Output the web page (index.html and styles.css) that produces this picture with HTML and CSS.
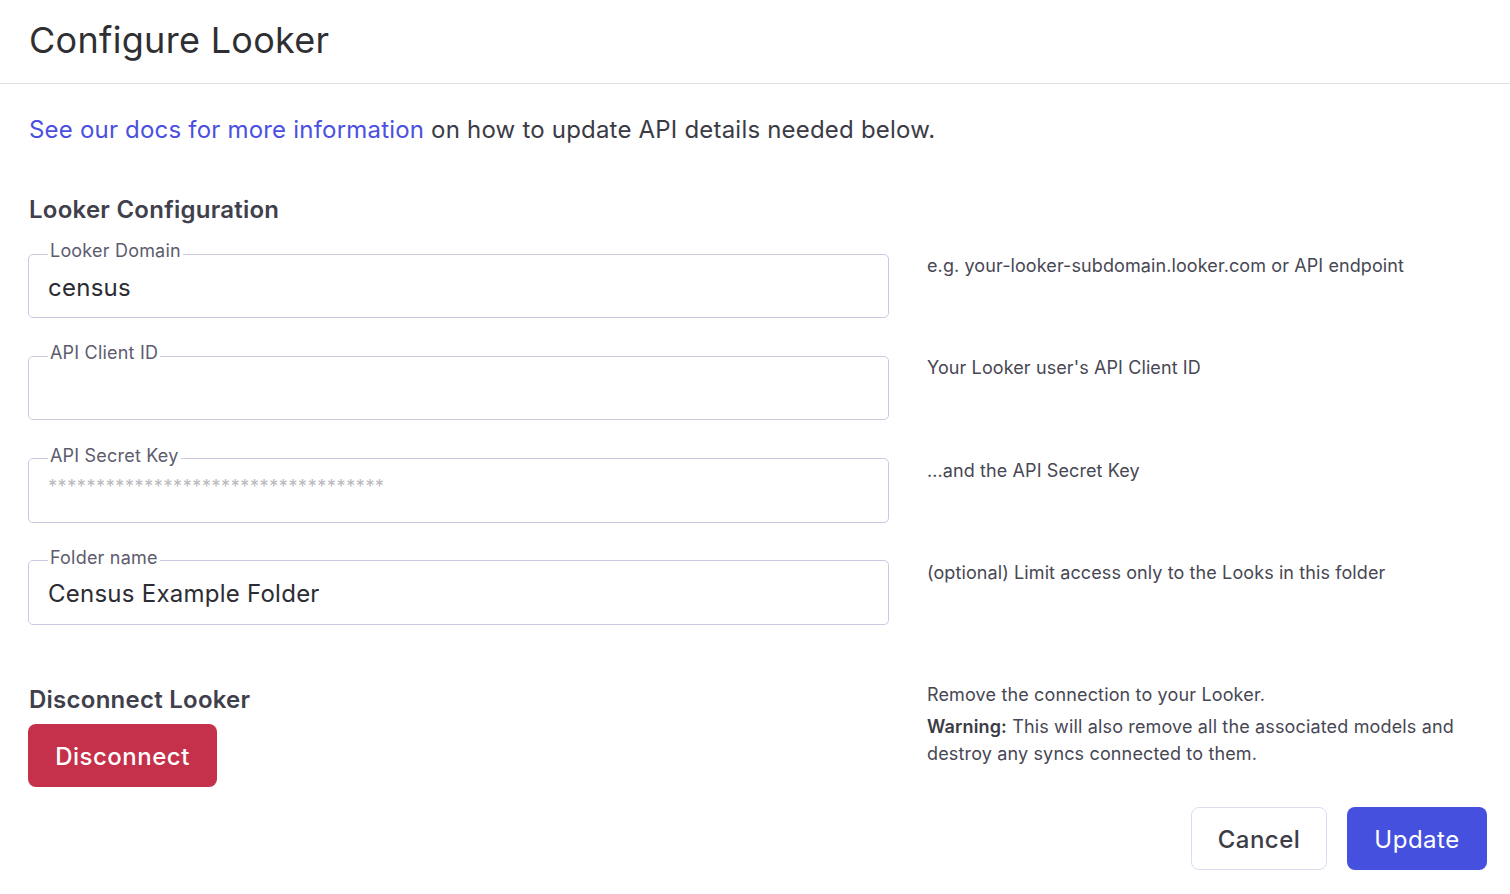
FILE: index.html
```html
<!DOCTYPE html>
<html lang="en">
<head>
<meta charset="utf-8">
<title>Configure Looker</title>
<link rel="stylesheet" href="styles.css">
</head>
<body>
<header class="modal-header">
  <h1 class="modal-title">Configure Looker</h1>
</header>
<main class="modal-body">
  <p class="intro"><a class="link" href="#">See our docs for more information</a> on how to update API details needed below.</p>

  <section class="config">
    <h2 class="section-title">Looker Configuration</h2>
    <div class="field-grid">
      <fieldset class="field">
        <legend class="field-label">Looker Domain</legend>
        <input class="field-input" type="text" value="census">
      </fieldset>
      <p class="hint">e.g. your-looker-subdomain.looker.com or API endpoint</p>

      <fieldset class="field">
        <legend class="field-label">API Client ID</legend>
        <input class="field-input" type="text" value="">
      </fieldset>
      <p class="hint">Your Looker user's API Client ID</p>

      <fieldset class="field">
        <legend class="field-label">API Secret Key</legend>
        <input class="field-input secret" type="text" placeholder="***********************************">
      </fieldset>
      <p class="hint">...and the API Secret Key</p>

      <fieldset class="field">
        <legend class="field-label">Folder name</legend>
        <input class="field-input" type="text" value="Census Example Folder">
      </fieldset>
      <p class="hint">(optional) Limit access only to the Looks in this folder</p>
    </div>
  </section>

  <section class="disconnect">
    <div class="disconnect-left">
      <h2 class="section-title">Disconnect Looker</h2>
      <button class="btn btn-danger" type="button">Disconnect</button>
    </div>
    <div class="disconnect-right">
      <p class="note">Remove the connection to your Looker.</p>
      <p class="note"><strong>Warning:</strong> This will also remove all the associated models and destroy any syncs connected to them.</p>
    </div>
  </section>

  <footer class="actions">
    <button class="btn btn-secondary" type="button">Cancel</button>
    <button class="btn btn-primary" type="button">Update</button>
  </footer>
</main>
</body>
</html>
```

FILE: styles.css
```css
* { box-sizing: border-box; }

html, body {
  margin: 0;
  padding: 0;
  background: #ffffff;
}

body {
  font-family: "Inter", "Noto Sans", sans-serif;
  color: #3b3b46;
  width: 1510px;
}

.modal-header {
  height: 84px;
  padding: 18px 29px 0;
  border-bottom: 1px solid #dedee2;
}

.modal-title {
  margin: 0;
  font-size: 36px;
  line-height: 44px;
  font-weight: 400;
  letter-spacing: 0.3px;
  color: #2f2f33;
}

.modal-body {
  padding: 30px 23px 0 28px;
}

.intro {
  margin: 0;
  font-size: 24px;
  line-height: 32px;
  letter-spacing: 0.2px;
  color: #3b3b46;
  padding-left: 1px;
}

.link {
  color: #4b50e0;
  text-decoration: none;
}

.config {
  margin-top: 48px;
}

.section-title {
  margin: 0;
  font-size: 24px;
  line-height: 32px;
  font-weight: 600;
  letter-spacing: 0.25px;
  color: #40404c;
  padding-left: 1px;
}

.field-grid {
  margin-top: 14px;
  display: grid;
  grid-template-columns: 861px 1fr;
  column-gap: 38px;
  row-gap: 24.33px;
}

.field {
  margin: 0;
  padding: 0 19px 11px;
  border: 1px solid #cbc9e2;
  border-radius: 5px;
  min-width: 0;
}

.field-label {
  padding: 0 2px 6px;
  font-size: 18px;
  line-height: 22px;
  letter-spacing: 0.2px;
  color: #5d5c6e;
}

.field-input {
  display: block;
  width: 100%;
  height: 38px;
  margin: 0;
  padding: 0;
  border: 0;
  outline: none;
  background: transparent;
  font-family: inherit;
  font-size: 24px;
  letter-spacing: 0.25px;
  color: #2c2c33;
}

.field-input.secret {
  font-size: 18px;
  letter-spacing: 0.6px;
  padding-bottom: 10px;
}

.field-input.secret::placeholder {
  color: #b9b9be;
}

.hint {
  margin: 15px 0 0;
  font-size: 18px;
  line-height: 22px;
  letter-spacing: 0.1px;
  color: #474753;
}

.disconnect {
  margin-top: 59px;
  display: grid;
  grid-template-columns: 861px 1fr;
  column-gap: 38px;
}

.disconnect-left .btn {
  margin-top: 8px;
}

.disconnect-right {
  margin-top: -2.5px;
  padding-right: 20px;
}

.note {
  margin: 0 0 5px;
  font-size: 18px;
  line-height: 27px;
  letter-spacing: 0.15px;
  color: #474753;
}

.note strong {
  font-weight: 600;
  color: #3b3b46;
}

.btn {
  height: 63px;
  padding: 4px 0 0;
  border-radius: 8px;
  font-family: inherit;
  font-size: 24px;
  line-height: 1;
  letter-spacing: 0.5px;
  cursor: pointer;
}

.btn-danger {
  width: 189px;
  background: #c5304a;
  border: 0;
  color: #ffffff;
  font-weight: 500;
}

.actions {
  margin-top: 20px;
  display: flex;
  justify-content: flex-end;
  gap: 20px;
}

.btn-secondary {
  width: 136px;
  background: #ffffff;
  border: 1px solid #dddbee;
  color: #3d3d48;
  font-weight: 500;
}

.btn-primary {
  width: 140px;
  background: #4551de;
  border: 0;
  color: #ffffff;
  font-weight: 400;
}
```
